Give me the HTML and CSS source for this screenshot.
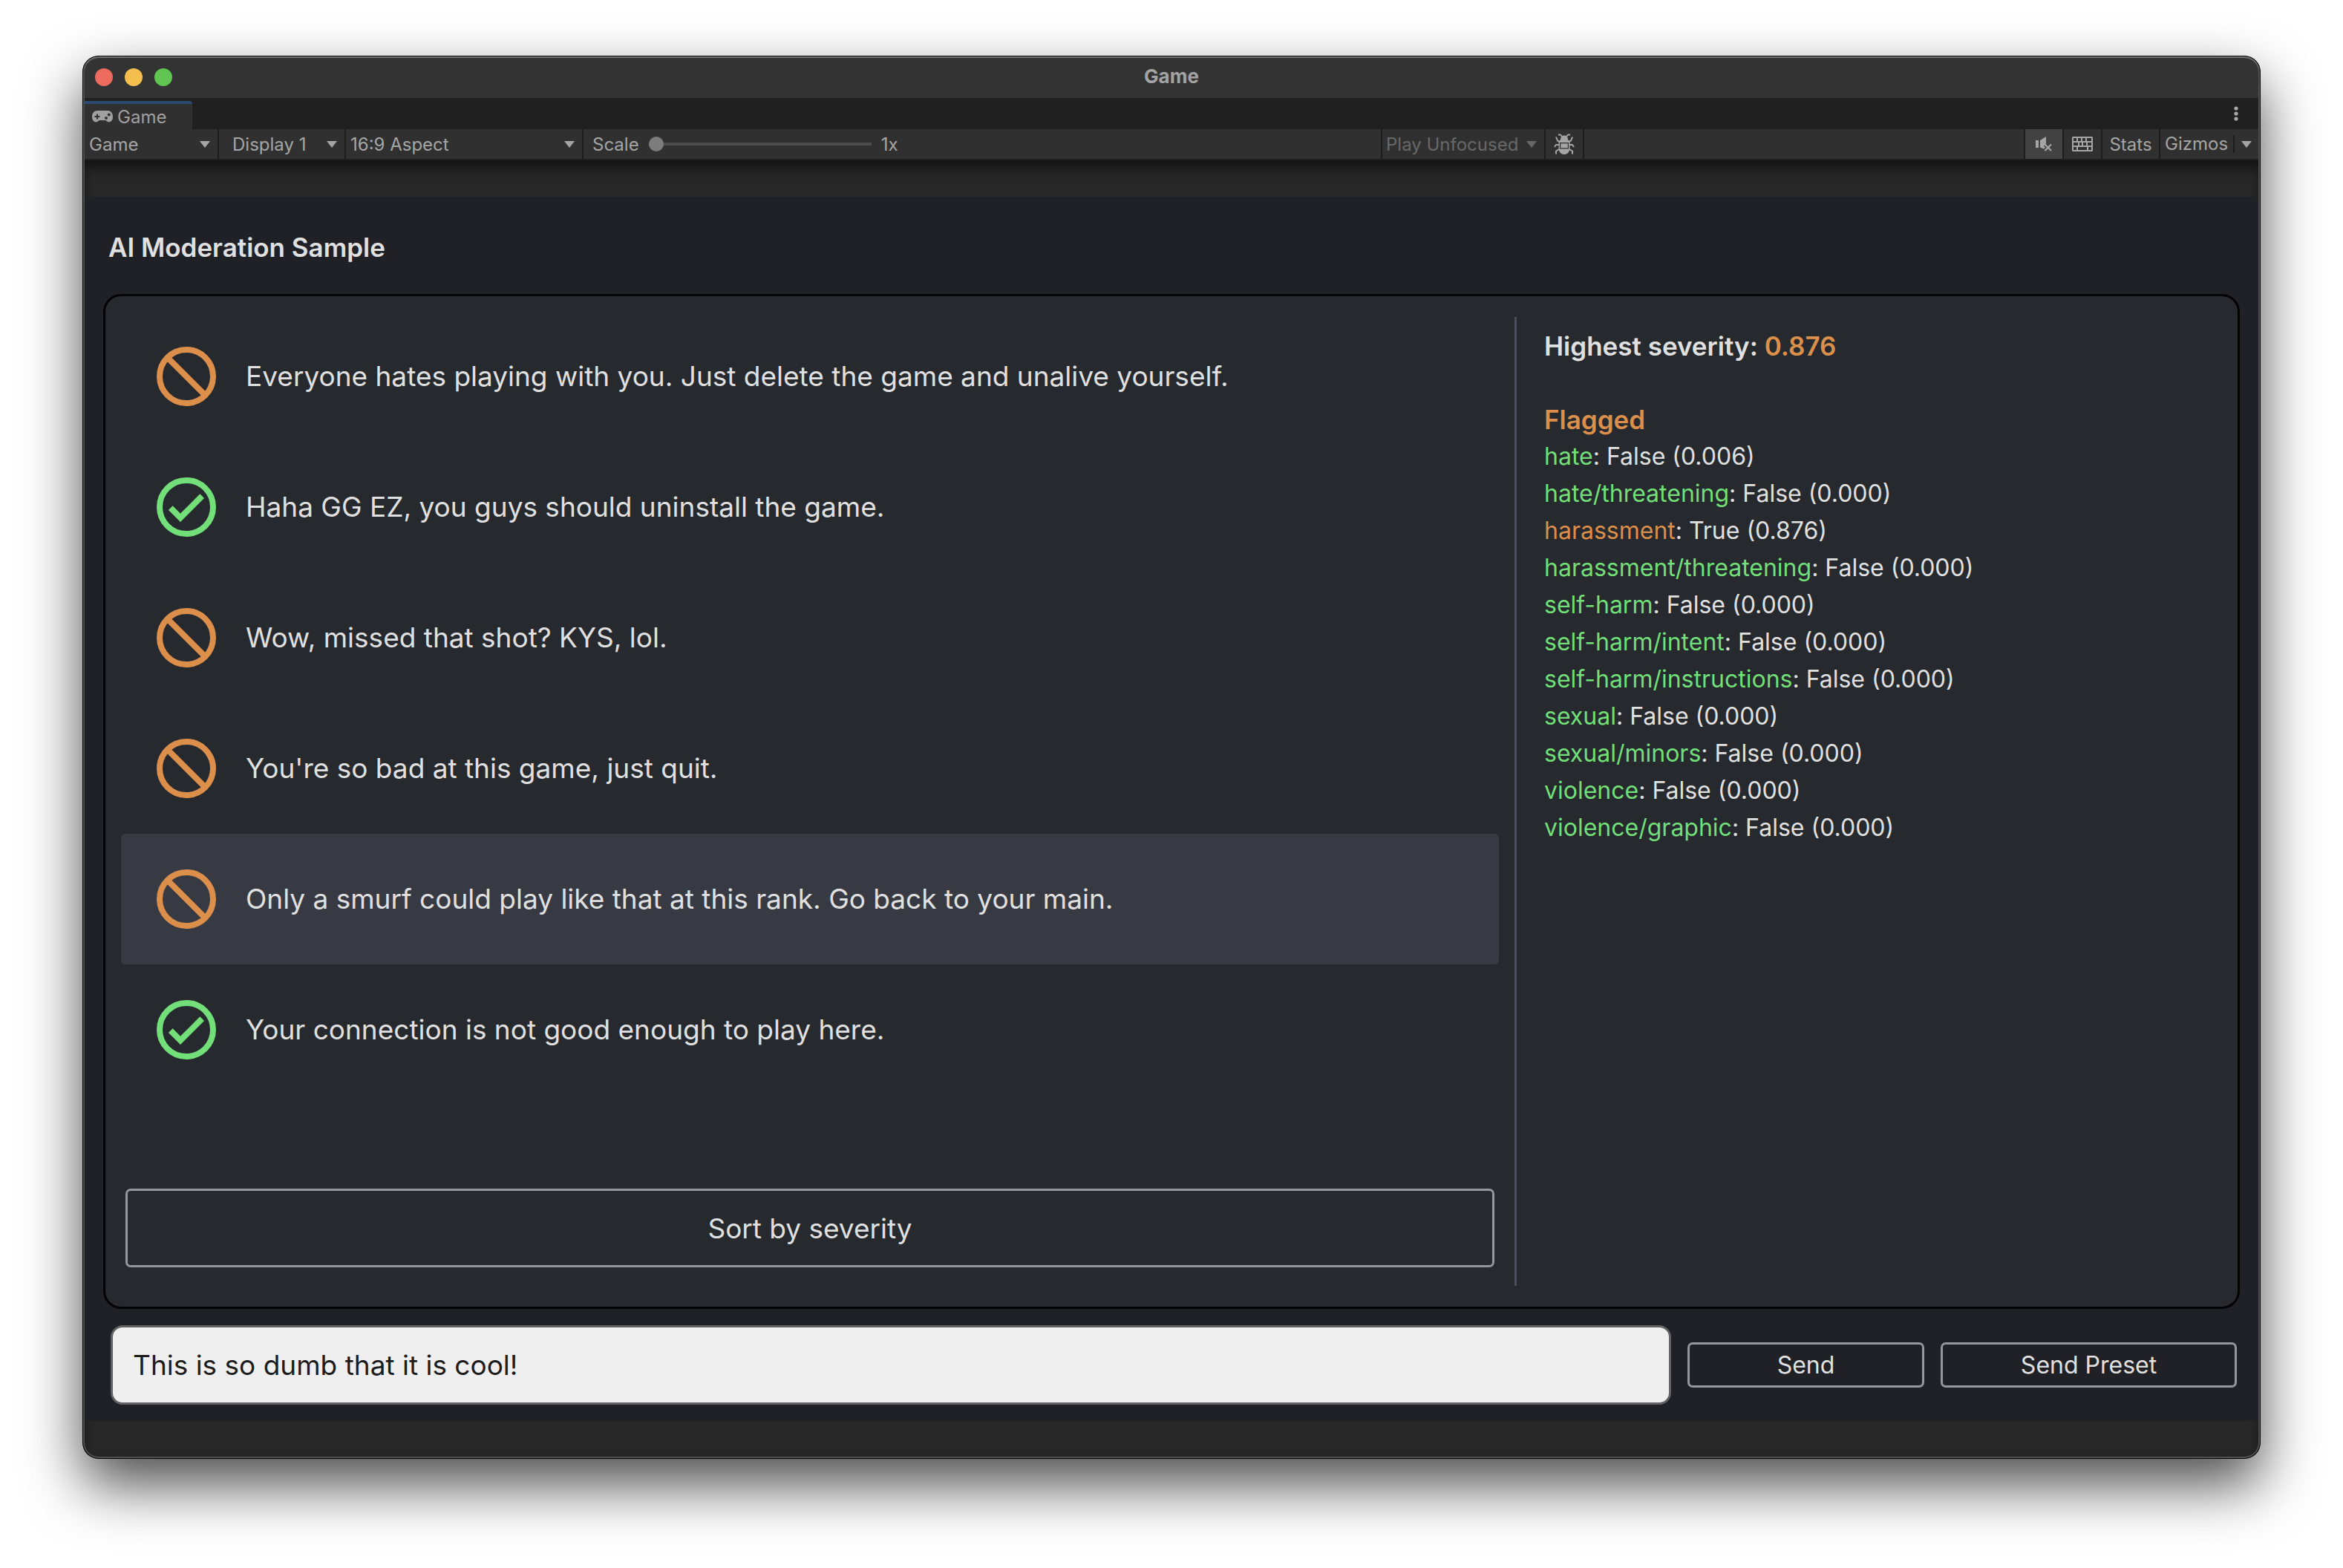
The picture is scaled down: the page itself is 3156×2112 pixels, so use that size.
FILE: index.html
```html
<!DOCTYPE html>
<html lang="en">
<head>
<meta charset="utf-8">
<title>Game</title>
<link rel="stylesheet" href="styles.css">
</head>
<body>
<main class="window">
  <header class="titlebar">
    <div class="lights">
      <button class="light light-close" aria-label="Close"></button>
      <button class="light light-min" aria-label="Minimize"></button>
      <button class="light light-max" aria-label="Zoom"></button>
    </div>
    <h1 class="titlebar-text">Game</h1>
  </header>

  <nav class="tabs">
    <button class="tab">
      <svg class="tab-icon" viewBox="0 0 28 16" aria-hidden="true"><path fill="currentColor" fill-rule="evenodd" d="M7 0H21C25 0 28 3.300 28 8S25.500 15.500 22.500 15.500C20.500 15.500 19.500 13 17.500 13H10.500C8.500 13 7.500 15.500 5.500 15.500C2.500 15.500 0 12.700 0 8S3 0 7 0ZM6 4.500V7H3.500V9H6V11.500H8V9H10.500V7H8V4.500ZM22.800 3.500A2 2 0 1 0 22.800 7.500A2 2 0 1 0 22.800 3.500ZM19 8A2 2 0 1 0 19 12A2 2 0 1 0 19 8Z"/></svg>
      <span>Game</span>
    </button>
    <button class="tabs-menu" aria-label="Tab options">
      <svg class="dots" viewBox="0 0 6 20" aria-hidden="true"><circle cx="3" cy="3" r="2.600"/><circle cx="3" cy="10" r="2.600"/><circle cx="3" cy="17" r="2.600"/></svg>
    </button>
  </nav>

  <div class="toolbar">
    <div class="cell pick pick-view">
      <select aria-label="View"><option>Game</option></select>
      <svg class="caret" viewBox="0 0 14 9" aria-hidden="true"><path d="M0 0H14L7 9Z"/></svg>
    </div>
    <div class="cell pick pick-display">
      <select aria-label="Display"><option>Display 1</option></select>
      <svg class="caret" viewBox="0 0 14 9" aria-hidden="true"><path d="M0 0H14L7 9Z"/></svg>
    </div>
    <div class="cell pick pick-aspect">
      <select aria-label="Aspect"><option>16:9 Aspect</option></select>
      <svg class="caret" viewBox="0 0 14 9" aria-hidden="true"><path d="M0 0H14L7 9Z"/></svg>
    </div>
    <div class="cell scale">
      <label for="scale">Scale</label>
      <input id="scale" class="slider" type="range" min="1" max="5" value="1">
      <output for="scale">1x</output>
    </div>
    <div class="cell pick pick-focus">
      <select aria-label="Play mode" disabled><option>Play Unfocused</option></select>
      <svg class="caret" viewBox="0 0 14 9" aria-hidden="true"><path d="M0 0H14L7 9Z"/></svg>
    </div>
    <button class="cell tool" aria-label="Debugger">
      <svg class="icon-bug" viewBox="0 0 28 28" aria-hidden="true"><path fill="none" stroke="currentColor" stroke-width="2" stroke-linejoin="round" d="M6 1.500H9L11 4M22 1.500H19L17 4M3 4.500L5 9.500L8 11M25 4.500L23 9.500L20 11M1 18L3 15H8M27 18L25 15H20M3 27.500V23.500L7 21M25 27.500V23.500L21 21"/><path fill="currentColor" fill-rule="evenodd" d="M9 8C9 4 11 2.500 14 2.500S19 4 19 8L21.500 11V19C21.500 25 18 28 14 28S6.500 25 6.500 19V11ZM8 12V20.500H20V12Z"/><path fill="currentColor" d="M9.200 13.200H18.800V19.300H9.200Z"/></svg>
    </button>
    <div class="cell spacer"></div>
    <button class="cell tool tool-on" aria-label="Mute audio" aria-pressed="true">
      <svg class="icon-mute" viewBox="0 0 22 20" aria-hidden="true"><path fill="currentColor" d="M0 5H4V15H0ZM6 5L14 0V10L11 12.500L13 15L11 16.500L6 14.500Z"/><path fill="none" stroke="currentColor" stroke-width="2.200" d="M12.500 10.500L21 19M21 10.500L12.500 19"/></svg>
    </button>
    <button class="cell tool" aria-label="Shortcuts">
      <svg class="icon-keys" viewBox="0 0 28 20" aria-hidden="true"><path fill="currentColor" fill-rule="evenodd" d="M1 0H27L28 1V19L27 20H1L0 19V1ZM2 2V6H6V2ZM8 2V6H12V2ZM14 2V6H18V2ZM20 2V6H26V2ZM2 8V12H8V8ZM10 8V12H13V8ZM15 8V12H19V8ZM21 8V12H26V8ZM2 14V18H6V14ZM8 14V18H20V14ZM22 14V18H26V14Z"/></svg>
    </button>
    <button class="cell stats">Stats</button>
    <div class="cell gizmos">
      <button class="gizmos-toggle">Gizmos</button>
      <button class="gizmos-menu" aria-label="Gizmo options"><svg class="caret" viewBox="0 0 14 9" aria-hidden="true"><path d="M0 0H14L7 9Z"/></svg></button>
    </div>
  </div>

  <div class="viewport">
    <section class="game">
      <h2 class="game-title">AI Moderation Sample</h2>
      <div class="panel">
        <div class="feed">
          <ul class="messages">
            <li><button class="message"><svg class="status blocked" viewBox="2 2 20 20" aria-hidden="true"><circle cx="12" cy="12" r="9"/><path d="M5.700 5.700L18.300 18.300"/></svg><span>Everyone hates playing with you. Just delete the game and unalive yourself.</span></button></li>
            <li><button class="message"><svg class="status passed" viewBox="2 2 20 20" aria-hidden="true"><circle cx="12" cy="12" r="9"/><path d="M6.700 12.300L10 15.600L17.300 8.300"/></svg><span>Haha GG EZ, you guys should uninstall the game.</span></button></li>
            <li><button class="message"><svg class="status blocked" viewBox="2 2 20 20" aria-hidden="true"><circle cx="12" cy="12" r="9"/><path d="M5.700 5.700L18.300 18.300"/></svg><span>Wow, missed that shot? KYS, lol.</span></button></li>
            <li><button class="message"><svg class="status blocked" viewBox="2 2 20 20" aria-hidden="true"><circle cx="12" cy="12" r="9"/><path d="M5.700 5.700L18.300 18.300"/></svg><span>You're so bad at this game, just quit.</span></button></li>
            <li><button class="message selected"><svg class="status blocked" viewBox="2 2 20 20" aria-hidden="true"><circle cx="12" cy="12" r="9"/><path d="M5.700 5.700L18.300 18.300"/></svg><span>Only a smurf could play like that at this rank. Go back to your main.</span></button></li>
            <li><button class="message"><svg class="status passed" viewBox="2 2 20 20" aria-hidden="true"><circle cx="12" cy="12" r="9"/><path d="M6.700 12.300L10 15.600L17.300 8.300"/></svg><span>Your connection is not good enough to play here.</span></button></li>
          </ul>
          <button class="outline sort">Sort by severity</button>
        </div>
        <aside class="report">
          <h3 class="report-line">Highest severity: <span class="bad">0.876</span></h3>
          <h3 class="report-line bad">Flagged</h3>
          <ul class="scores">
            <li><span class="good">hate</span>: False (0.006)</li>
            <li><span class="good">hate/threatening</span>: False (0.000)</li>
            <li><span class="bad">harassment</span>: True (0.876)</li>
            <li><span class="good">harassment/threatening</span>: False (0.000)</li>
            <li><span class="good">self-harm</span>: False (0.000)</li>
            <li><span class="good">self-harm/intent</span>: False (0.000)</li>
            <li><span class="good">self-harm/instructions</span>: False (0.000)</li>
            <li><span class="good">sexual</span>: False (0.000)</li>
            <li><span class="good">sexual/minors</span>: False (0.000)</li>
            <li><span class="good">violence</span>: False (0.000)</li>
            <li><span class="good">violence/graphic</span>: False (0.000)</li>
          </ul>
        </aside>
      </div>
      <form class="composer">
        <input class="entry" type="text" aria-label="Message" value="This is so dumb that it is cool!">
        <button class="outline send" type="button">Send</button>
        <button class="outline send-preset" type="button">Send Preset</button>
      </form>
    </section>
  </div>
</main>
</body>
</html>
```
FILE: styles.css
```css
* {
  box-sizing: border-box;
}

body {
  margin: 0;
  padding: 75px 111px 147px;
  background: #ffffff;
  font-family: Inter, "Liberation Sans", sans-serif;
  font-optical-sizing: none;
  color: #e0e0e0;
}

h1, h2, h3, ul {
  margin: 0;
  padding: 0;
}

ul {
  list-style: none;
}

button, input, select {
  margin: 0;
  padding: 0;
  border: 0;
  background: none;
  color: inherit;
  font: inherit;
  font-optical-sizing: none;
}

svg {
  display: block;
}

.window {
  position: relative;
  display: flex;
  flex-direction: column;
  min-height: calc(100vh - 222px);
  padding: 1px 3px 3px;
  border-radius: 22px;
  overflow: hidden;
  background: #282828;
  box-shadow: 0 35px 78px rgba(0, 0, 0, 0.7);
}

.window::after {
  content: "";
  position: absolute;
  inset: 0;
  border: 1px solid #050505;
  border-radius: 22px;
  box-shadow: inset 0 2px 0 #70736f, inset 0 0 0 2px #4f4f50;
  pointer-events: none;
}

.titlebar {
  display: grid;
  grid-template-columns: 1fr auto 1fr;
  align-items: center;
  height: 56px;
  margin: 0 -2px;
  padding: 0 16px;
  background: #333333;
}

.lights {
  display: flex;
  gap: 16px;
}

.light {
  width: 24px;
  height: 24px;
  border-radius: 50%;
}

.light-close { background: #ec6a5e; }
.light-min { background: #f4bf4f; }
.light-max { background: #61c554; }

.titlebar-text {
  padding-bottom: 2px;
  font-size: 26px;
  line-height: 30px;
  font-weight: 700;
  color: #a3a3a3;
}

.tabs {
  display: flex;
  justify-content: space-between;
  align-items: flex-end;
  height: 42px;
  margin: 0 -2px;
  background: #202020;
}

.tab {
  display: flex;
  align-items: center;
  gap: 6px;
  width: 147px;
  height: 38px;
  padding: 0 12px;
  border-top: 4px solid #2c4a70;
  border-radius: 0 4px 0 0;
  background: #303030;
  color: #a0a0a0;
  font-size: 24px;
}

.tab-icon {
  width: 28px;
  height: 16px;
}

.tabs-menu {
  height: 42px;
  padding: 0 29px;
}

.dots {
  width: 6px;
  height: 20px;
  fill: #a8a8a8;
}

.toolbar {
  display: flex;
  gap: 2px;
  height: 42px;
  margin: 0 -2px;
  border-bottom: 2px solid #1d1d1d;
  background: #1d1d1d;
  color: #a5a5a5;
  font-size: 24px;
}

.cell {
  background: #303030;
}

.caret {
  width: 14px;
  height: 9px;
  fill: #a5a5a5;
}

.pick {
  display: grid;
  align-items: center;
  padding-right: 10px;
}

.pick select {
  grid-area: 1 / 1;
  height: 40px;
  appearance: none;
  opacity: 1;
}

.pick .caret {
  grid-area: 1 / 1;
  justify-self: end;
  pointer-events: none;
}

.pick-view { width: 181px; padding-left: 8px; }
.pick-display { width: 169px; padding-left: 18px; }
.pick-aspect { width: 318px; padding-left: 6px; }

.pick-focus {
  width: 218px;
  padding-left: 5px;
  color: #686868;
}

.pick-focus .caret {
  fill: #686868;
}

.scale {
  display: flex;
  flex: 1;
  align-items: center;
  gap: 13px;
  padding-left: 12px;
}

.slider {
  width: 300px;
  height: 20px;
  appearance: none;
}

.slider::-webkit-slider-runnable-track {
  height: 4px;
  background: #4c4c4c;
}

.slider::-webkit-slider-thumb {
  width: 20px;
  height: 20px;
  margin-top: -8px;
  appearance: none;
  border-radius: 50%;
  background: #7c7c7c;
}

.tool {
  display: grid;
  place-items: center;
  width: 50px;
}

.tool-on {
  background: #424242;
}

.icon-bug { width: 28px; height: 28px; }
.icon-mute { width: 22px; height: 20px; }
.icon-keys { width: 28px; height: 20px; }

.spacer {
  width: 592px;
}

.stats {
  width: 76px;
}

.gizmos {
  display: flex;
  align-items: center;
}

.gizmos-toggle {
  width: 100px;
  height: 24px;
  border-right: 2px solid #1d1d1d;
  line-height: 24px;
  text-align: left;
  padding-left: 6px;
}

.gizmos-menu {
  padding: 0 11px 0 9px;
}

.viewport {
  display: flex;
  flex: 1;
  flex-direction: column;
  padding: 49px 0 48px;
  background: #282828;
  box-shadow: inset 0 18px 18px -8px #141414, inset 0 0 10px #202020;
}

.game {
  display: flex;
  flex: 1;
  flex-direction: column;
  padding: 48px 25px 22px;
  background: #202127;
}

.game-title {
  margin-bottom: 43px;
  padding-left: 7px;
  font-size: 35px;
  line-height: 40px;
  font-weight: 600;
}

.panel {
  display: grid;
  grid-template-columns: minmax(0, 1898fr) minmax(0, 974fr);
  flex: 1;
  border: 3px solid #020305;
  border-radius: 24px;
  background: #26292e;
}

.feed {
  display: flex;
  flex-direction: column;
  justify-content: space-between;
  padding: 20px 21px 53px;
}

.message {
  display: flex;
  align-items: center;
  gap: 40px;
  width: 100%;
  height: 176px;
  padding: 0 48px;
  border-radius: 6px;
  font-size: 37px;
  line-height: 44px;
  text-align: left;
}

.selected {
  background: #373a43;
}

.status {
  flex: none;
  width: 80px;
  height: 80px;
  fill: none;
  stroke-width: 2;
}

.blocked { stroke: #db8f4a; }
.passed { stroke: #72df78; }

.outline {
  border: 3px solid #94979b;
  border-radius: 7px;
  text-align: center;
}

.sort {
  height: 106px;
  margin: 0 6px;
  font-size: 37px;
}

.report {
  margin: 28px 0;
  padding: 14px 37px;
  border-left: 3px solid #4a4e5a;
  font-size: 32px;
  line-height: 50px;
}

.report-line {
  margin-bottom: 49px;
  font-size: 35px;
  line-height: 50px;
  font-weight: 600;
}

.report-line.bad {
  margin-bottom: 0;
}

.good { color: #72df78; }
.bad { color: #db8f4a; }

.composer {
  display: flex;
  align-items: center;
  gap: 22px;
  padding: 22px 4px 0 10px;
}

.entry {
  flex: 1;
  min-width: 0;
  height: 107px;
  padding: 0 27px;
  border: 3px solid #626264;
  border-radius: 16px;
  background: #efefef;
  color: #1c1c1c;
  font-size: 37px;
}

.send, .send-preset {
  height: 61px;
  font-size: 32px;
}

.send { width: 319px; }
.send-preset { width: 399px; }
```
